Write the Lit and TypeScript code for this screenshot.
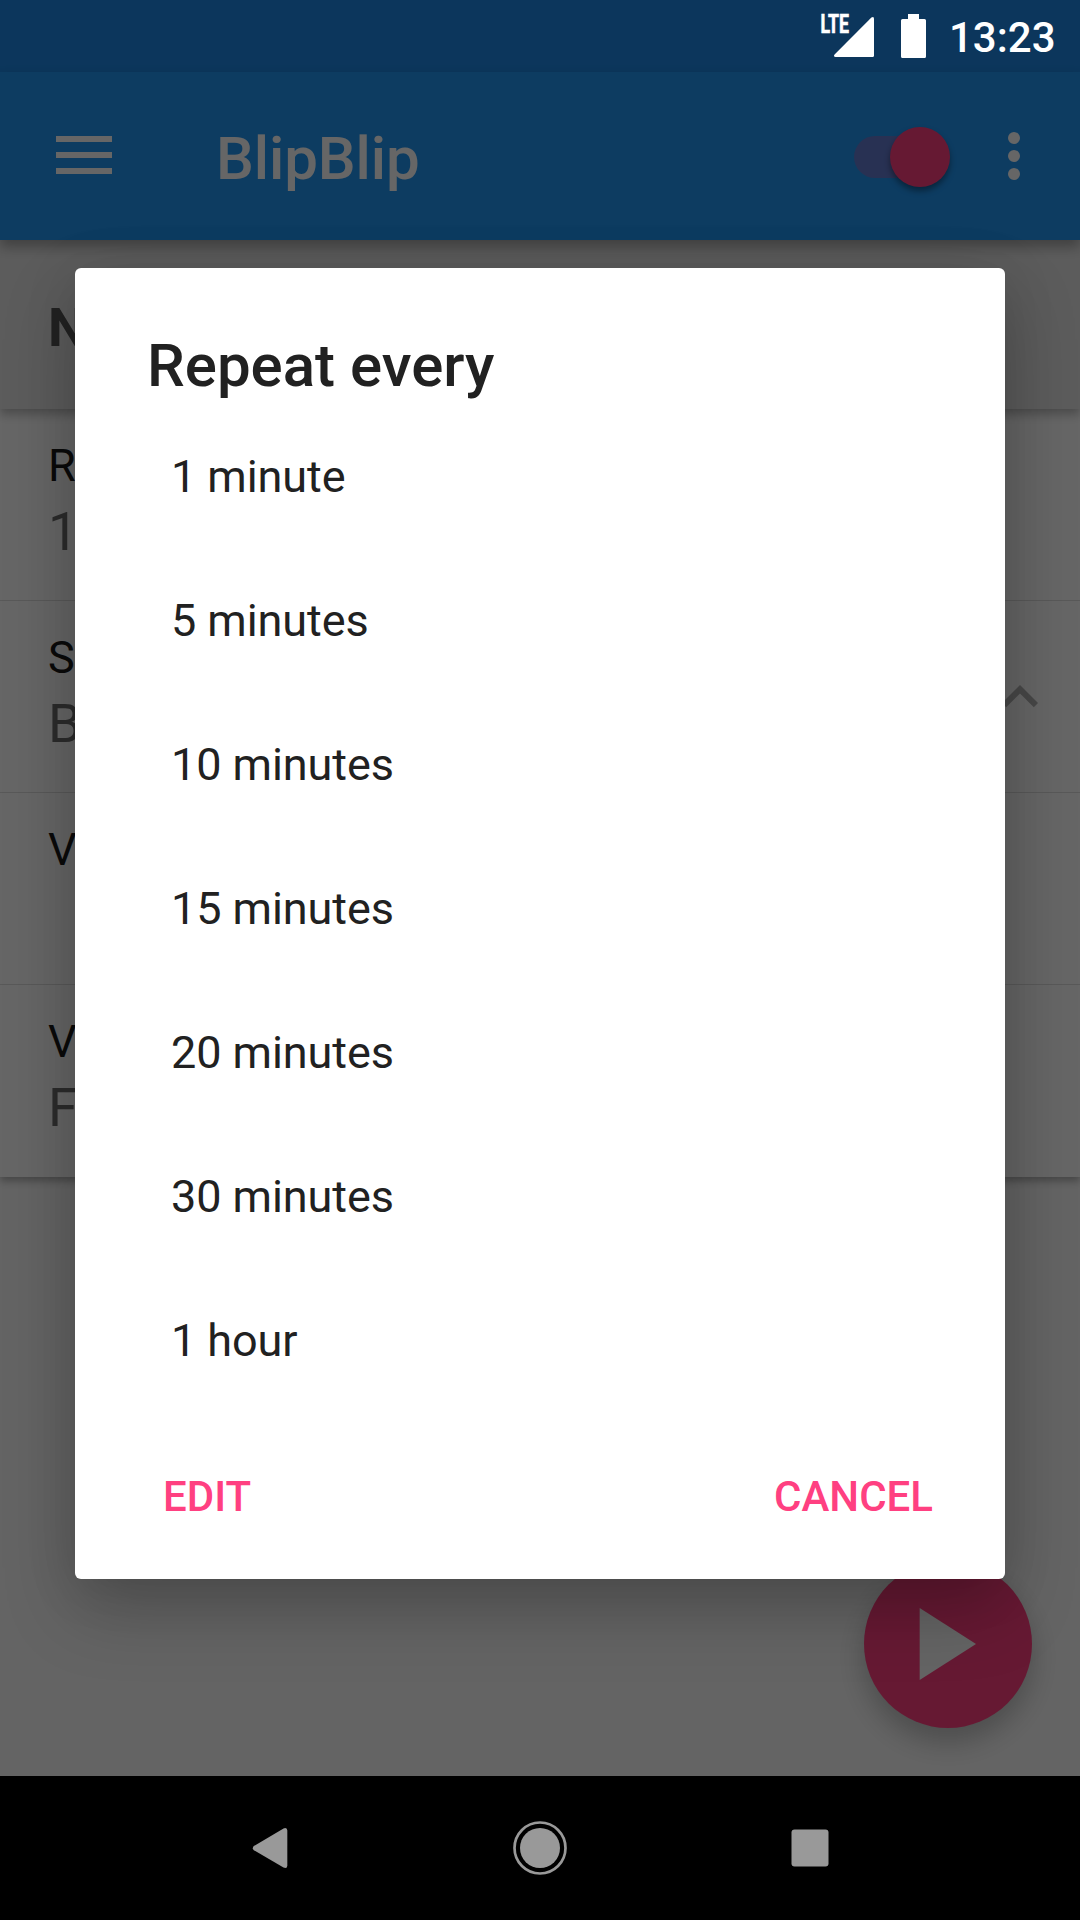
import { LitElement, html, css, svg, nothing } from "lit";
import { customElement, property } from "lit/decorators.js";

interface SettingRow {
  title: string;
  value?: string;
  expandable?: boolean;
}

const ROWS: SettingRow[] = [
  { title: "R", value: "1" },
  { title: "S", value: "B", expandable: true },
  { title: "V" },
  { title: "V", value: "F" },
];

const INTERVALS = [
  "1 minute",
  "5 minutes",
  "10 minutes",
  "15 minutes",
  "20 minutes",
  "30 minutes",
  "1 hour",
];

@customElement("status-bar")
class StatusBar extends LitElement {
  static styles = css`
    :host {
      display: flex;
      justify-content: flex-end;
      height: 72px;
      padding-right: 25px;
      box-sizing: border-box;
      color: #fff;
    }
    .icons {
      display: block;
      width: 120px;
      height: 72px;
      margin-right: 9px;
    }
    .lte {
      font: 700 25px Roboto, sans-serif;
      fill: #fff;
      stroke: #fff;
      stroke-width: 0.7px;
    }
    .clock {
      font: 500 42px/48px Roboto, sans-serif;
      padding-top: 14px;
      width: 106px;
      white-space: nowrap;
    }
  `;

  render() {
    return html`
      <svg class="icons" viewBox="820 0 120 72" fill="#fff">
        ${svg`<text class="lte" x="820.5" y="33.4" textLength="28.5" lengthAdjust="spacingAndGlyphs">LTE</text>`}
        <path d="M871.4 17.6 Q874 16 874 19 V55.5 Q874 57 872.5 57 H835.5 Q833 56.3 834.6 54.4 Z" />
        <path d="M908 14 H919 V19 H924.5 Q926 19 926 20.5 V56.5 Q926 58 924.5 58 H902.5 Q901 58 901 56.5 V20.5 Q901 19 902.5 19 H908 Z" />
      </svg>
      <div class="clock">13:23</div>
    `;
  }
}

@customElement("app-toolbar")
class AppToolbar extends LitElement {
  static styles = css`
    :host {
      display: flex;
      align-items: center;
      height: 168px;
      box-sizing: border-box;
      padding: 0 60px 0 56px;
      background: #2196f3;
      box-shadow: 0 7px 12px rgba(0, 0, 0, 0.3);
      position: relative;
    }
    .menu {
      display: flex;
      flex-direction: column;
      gap: 10px;
      width: 56px;
      padding-bottom: 2px;
    }
    .line {
      height: 6px;
      background: #fff;
    }
    .title {
      flex: 1;
      margin-left: 104px;
      padding-top: 5px;
      font: 500 60px/70px Roboto, sans-serif;
      letter-spacing: -0.1px;
      color: #fff;
    }
    .switch {
      display: flex;
      align-items: center;
      justify-content: flex-end;
      width: 86px;
      height: 42px;
      border-radius: 21px;
      background: rgba(255, 64, 129, 0.3);
      margin: 1px 68px 0 0;
    }
    .thumb {
      width: 60px;
      height: 60px;
      flex: none;
      border-radius: 50%;
      background: #ff4081;
      margin: 0 -9.5px 0 0;
      box-shadow: 0 4px 6px rgba(0, 0, 0, 0.4);
    }
    .more {
      display: flex;
      flex-direction: column;
      gap: 6px;
    }
    .dot {
      width: 12px;
      height: 12px;
      border-radius: 50%;
      background: #fff;
    }
  `;

  render() {
    return html`
      <div class="menu">
        <div class="line"></div>
        <div class="line"></div>
        <div class="line"></div>
      </div>
      <div class="title">BlipBlip</div>
      <div class="switch"><div class="thumb"></div></div>
      <div class="more">
        <div class="dot"></div>
        <div class="dot"></div>
        <div class="dot"></div>
      </div>
    `;
  }
}

@customElement("setting-row")
class SettingRowElement extends LitElement {
  @property({ attribute: false }) row!: SettingRow;

  static styles = css`
    :host {
      display: flex;
      align-items: center;
      justify-content: space-between;
      height: 192px;
      box-sizing: border-box;
      padding: 0 24px 0 48px;
      font-family: Roboto, sans-serif;
    }
    .texts {
      display: flex;
      flex-direction: column;
      height: 192px;
      box-sizing: border-box;
      padding-top: 30px;
    }
    .title {
      font-size: 45px;
      line-height: 54px;
      color: #191919;
    }
    .value {
      font-size: 54px;
      line-height: 64px;
      margin-top: 7px;
      color: #6f6f6f;
    }
    .chevron {
      width: 72px;
      height: 72px;
      fill: #b4b4b4;
    }
  `;

  render() {
    return html`
      <div class="texts">
        <div class="title">${this.row.title}</div>
        ${this.row.value ? html`<div class="value">${this.row.value}</div>` : nothing}
      </div>
      ${this.row.expandable
        ? html`<svg class="chevron" viewBox="0 0 24 24">
            <path d="M12 8l-6 6 1.41 1.41L12 10.83l4.59 4.58L18 14z" />
          </svg>`
        : nothing}
    `;
  }
}

@customElement("interval-dialog")
class IntervalDialog extends LitElement {
  static styles = css`
    :host {
      display: flex;
      flex-direction: column;
      width: 930px;
      height: 1311px;
      box-sizing: border-box;
      border-radius: 6px;
      background: #fff;
      color: #212121;
      font-family: Roboto, sans-serif;
      box-shadow: 0 30px 72px rgba(0, 0, 0, 0.22), 0 6px 54px rgba(0, 0, 0, 0.1);
    }
    .heading {
      font-size: 60px;
      font-weight: 500;
      line-height: 70px;
      padding: 63px 72px 0;
    }
    .list {
      display: flex;
      flex-direction: column;
      margin-top: 4px;
    }
    .item {
      height: 144px;
      box-sizing: border-box;
      display: flex;
      align-items: center;
      padding-left: 96px;
      font-size: 45px;
      line-height: 54px;
      letter-spacing: -0.08px;
    }
    .actions {
      display: flex;
      justify-content: space-between;
      padding: 59px 72px 0 88px;
      font-size: 42px;
      font-weight: 500;
      line-height: 50px;
      color: #ff4081;
    }
  `;

  render() {
    return html`
      <div class="heading">Repeat every</div>
      <div class="list">
        ${INTERVALS.map((label) => html`<div class="item">${label}</div>`)}
      </div>
      <div class="actions"><span>EDIT</span><span>CANCEL</span></div>
    `;
  }
}

@customElement("app-root")
class AppRoot extends LitElement {
  static styles = css`
    :host {
      display: block;
      width: 1080px;
      height: 1920px;
      overflow: hidden;
      position: relative;
      background: #000;
    }
    .app {
      height: 1776px;
      position: relative;
      isolation: isolate;
      overflow: hidden;
      background: #fafafa;
    }
    .status-bg {
      height: 72px;
      background: #1e88e5;
    }
    app-toolbar {
      z-index: 2;
    }
    .section {
      display: flex;
      height: 169px;
      box-sizing: border-box;
      padding: 56px 48px 0;
      background: #e6e6e6;
      color: #555;
      font: 700 54px/64px Roboto, sans-serif;
      box-shadow: 0 5px 10px rgba(0, 0, 0, 0.28);
      position: relative;
      z-index: 1;
    }
    .card {
      display: flex;
      flex-direction: column;
      background: #fff;
      box-shadow: 0 4px 8px rgba(0, 0, 0, 0.3);
    }
    .row {
      height: 192px;
      box-sizing: border-box;
      border-bottom: 1px solid #dedede;
    }
    .row:last-child {
      border-bottom: none;
    }
    .fab {
      position: absolute;
      right: 48px;
      bottom: 48px;
      width: 168px;
      height: 168px;
      border-radius: 50%;
      background: #ff4081;
      box-shadow: 0 14px 28px rgba(0, 0, 0, 0.24);
    }
    .fab-icon {
      display: block;
      width: 168px;
      height: 168px;
      fill: #fafafa;
    }
    .overlay {
      position: absolute;
      inset: 0 0 144px 0;
      display: flex;
      flex-direction: column;
      align-items: center;
      gap: 196px;
      background: rgba(0, 0, 0, 0.6);
      overflow: hidden;
    }
    status-bar {
      align-self: stretch;
    }
    .nav {
      display: block;
      width: 1080px;
      height: 144px;
      position: relative;
      background: #000;
    }
  `;

  render() {
    return html`
      <div class="app">
        <div class="status-bg"></div>
        <app-toolbar></app-toolbar>
        <div class="section">N</div>
        <div class="card">
          ${ROWS.map((row) => html`<setting-row class="row" .row=${row}></setting-row>`)}
        </div>
        <div class="fab">
          <svg class="fab-icon" viewBox="0 0 168 168"><path d="M55.7 48 L112 84 L55.7 120 Z" /></svg>
        </div>
      </div>
      <div class="overlay">
        <status-bar></status-bar>
        <interval-dialog></interval-dialog>
      </div>
      <svg class="nav" viewBox="0 0 1080 144" fill="#999">
        <path d="M253.8 70 L283.5 52.4 Q287.3 51 287.3 54.6 V89.4 Q287.3 93 283.5 91.6 L253.8 74.2 Q251.8 72.2 253.8 70 Z" />
        <circle cx="540" cy="72" r="20" />
        <circle cx="540" cy="72" r="25.5" fill="none" stroke="#999" stroke-width="2.7" />
        <rect x="791.5" y="53.5" width="37" height="37" rx="3" />
      </svg>
    `;
  }
}
